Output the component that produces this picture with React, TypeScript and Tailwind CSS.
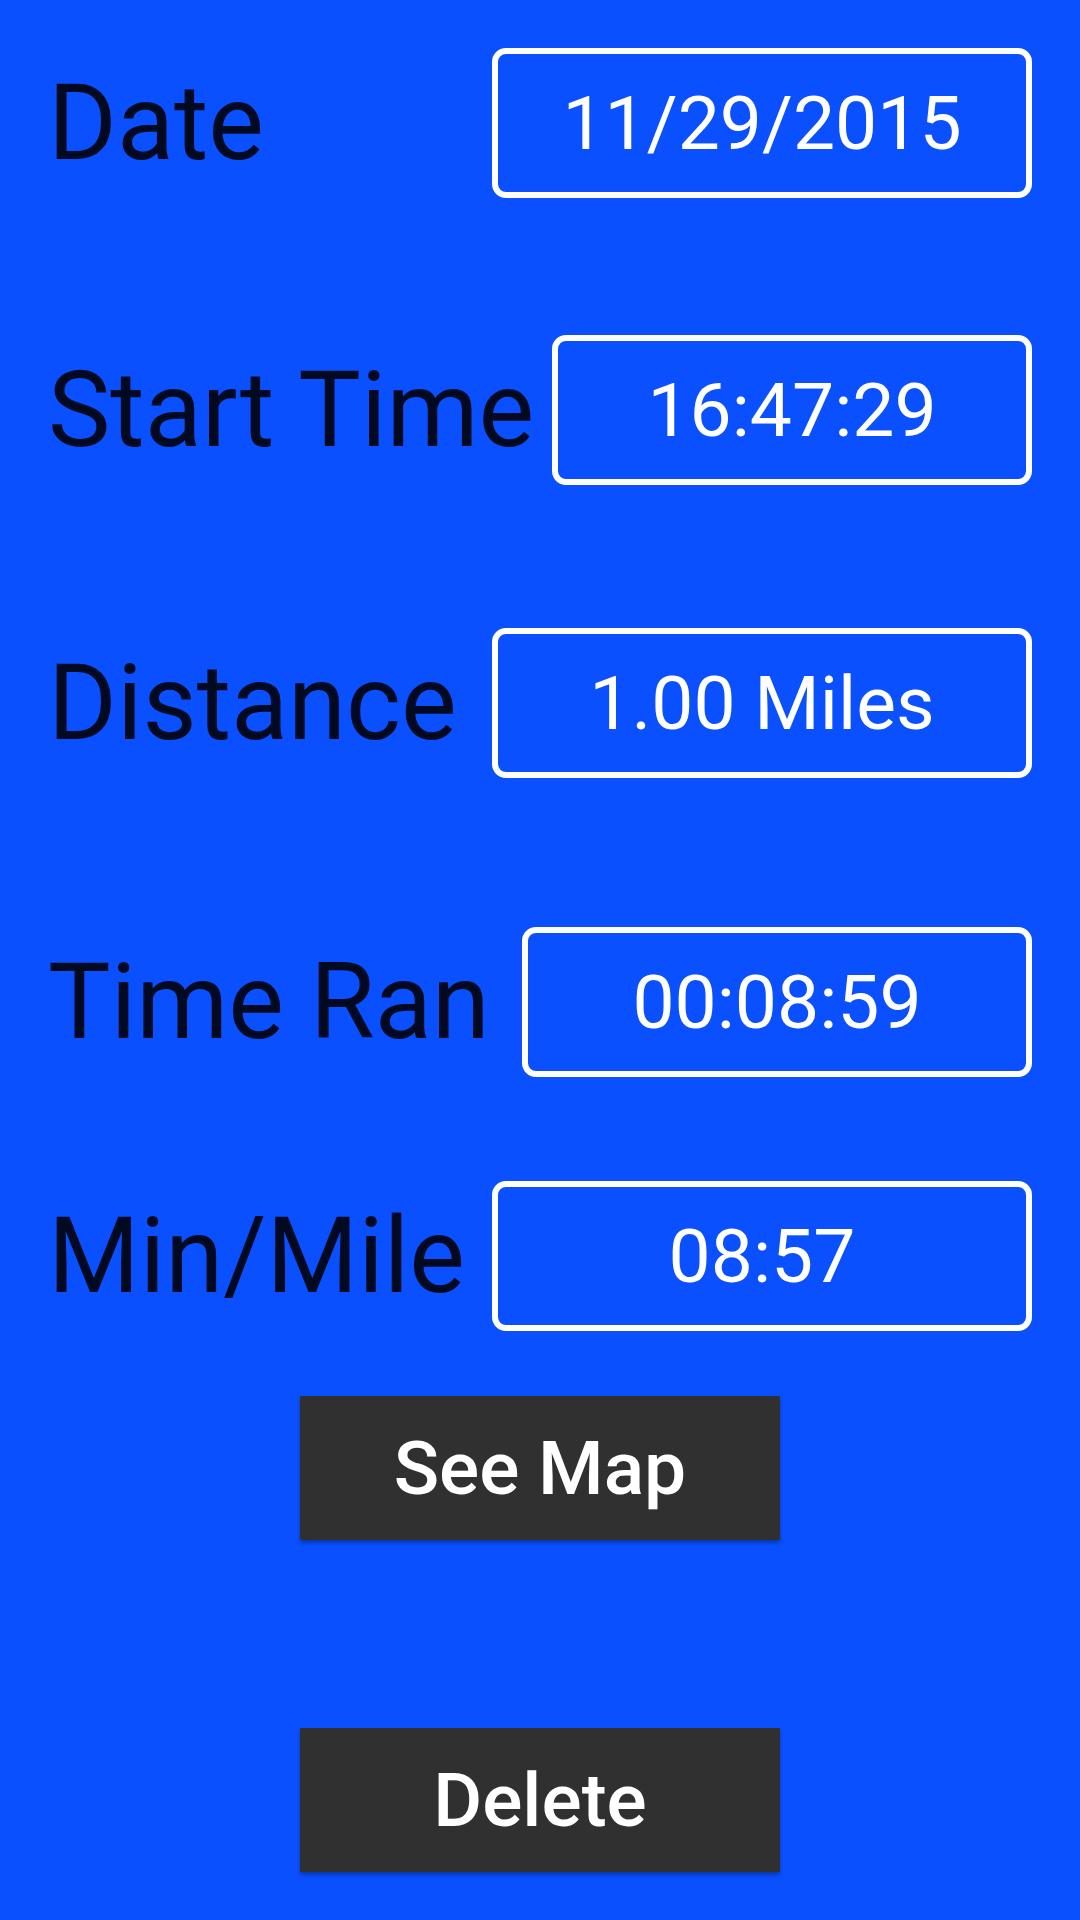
import React from "react";

const rows = [
  { label: "Date", value: "11/29/2015", w: "w-[540px]", mt: "mt-[48px]" },
  { label: "Start Time", value: "16:47:29", w: "w-[480px]", mt: "mt-[137px]" },
  { label: "Distance", value: "1.00 Miles", w: "w-[540px]", mt: "mt-[143px]" },
  { label: "Time Ran", value: "00:08:59", w: "w-[510px]", mt: "mt-[149px]" },
  { label: "Min/Mile", value: "08:57", w: "w-[540px]", mt: "mt-[104px]" },
];

export default function App() {
  return (
    <div
      className="w-[1080px] h-[1920px] bg-[#0a50ff] flex flex-col overflow-hidden"
      style={{ fontFamily: "Roboto, 'Noto Sans', sans-serif" }}
    >
      {rows.map((r) => (
        <div key={r.label} className={`${r.mt} flex items-center justify-between pl-[48px] pr-[48px] h-[150px]`}>
          <span className="text-[105px] leading-none text-[#010a21] whitespace-nowrap">{r.label}</span>
          <div
            className={`${r.w} h-[150px] border-[6px] border-white rounded-[14px] flex items-center justify-center`}
          >
            <span className="text-[75px] leading-none text-white whitespace-nowrap">{r.value}</span>
          </div>
        </div>
      ))}
      <div className="mt-[65px] flex justify-center">
        <button className="w-[480px] h-[144px] bg-[#303030] text-white text-[75px] font-medium leading-none shadow-[0_3px_4px_rgba(0,0,0,0.3)]">
          See Map
        </button>
      </div>
      <div className="mt-[188px] flex justify-center">
        <button className="w-[480px] h-[144px] bg-[#303030] text-white text-[75px] font-medium leading-none shadow-[0_3px_4px_rgba(0,0,0,0.3)]">
          Delete
        </button>
      </div>
    </div>
  );
}
